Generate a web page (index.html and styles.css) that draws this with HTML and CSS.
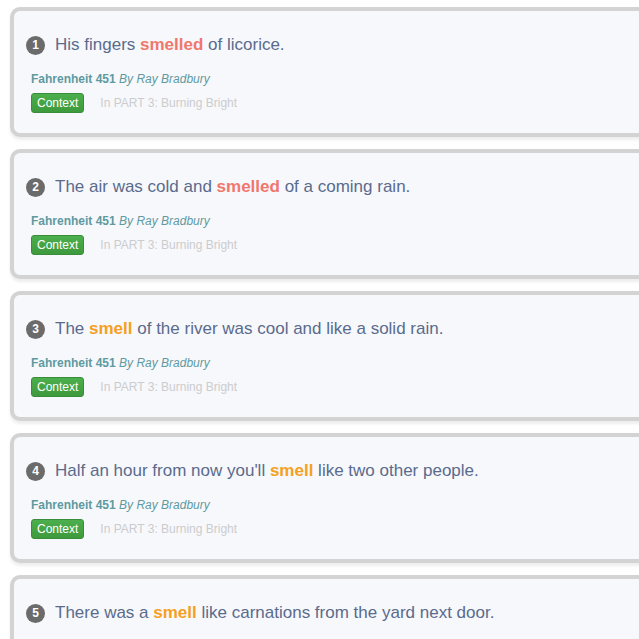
FILE: index.html
```html
<!DOCTYPE html>
<html>
<head>
<meta charset="utf-8">
<link rel="stylesheet" href="styles.css">
</head>
<body>
<div class="list">
  <div class="card">
    <div class="sentence"><span class="num">1</span><span>His fingers <b class="hl red">smelled</b> of licorice.</span></div>
    <div class="meta"><b>Fahrenheit 451</b> <i>By Ray Bradbury</i></div>
    <div class="ctx"><span class="btn">Context</span><span class="loc">In PART 3: Burning Bright</span></div>
  </div>
  <div class="card">
    <div class="sentence"><span class="num">2</span><span>The air was cold and <b class="hl red">smelled</b> of a coming rain.</span></div>
    <div class="meta"><b>Fahrenheit 451</b> <i>By Ray Bradbury</i></div>
    <div class="ctx"><span class="btn">Context</span><span class="loc">In PART 3: Burning Bright</span></div>
  </div>
  <div class="card">
    <div class="sentence"><span class="num">3</span><span>The <b class="hl orange">smell</b> of the river was cool and like a solid rain.</span></div>
    <div class="meta"><b>Fahrenheit 451</b> <i>By Ray Bradbury</i></div>
    <div class="ctx"><span class="btn">Context</span><span class="loc">In PART 3: Burning Bright</span></div>
  </div>
  <div class="card">
    <div class="sentence"><span class="num">4</span><span>Half an hour from now you'll <b class="hl orange">smell</b> like two other people.</span></div>
    <div class="meta"><b>Fahrenheit 451</b> <i>By Ray Bradbury</i></div>
    <div class="ctx"><span class="btn">Context</span><span class="loc">In PART 3: Burning Bright</span></div>
  </div>
  <div class="card">
    <div class="sentence"><span class="num">5</span><span>There was a <b class="hl orange">smell</b> like carnations from the yard next door.</span></div>
    <div class="meta"><b>Fahrenheit 451</b> <i>By Ray Bradbury</i></div>
    <div class="ctx"><span class="btn">Context</span><span class="loc">In PART 3: Burning Bright</span></div>
  </div>
</div>
</body>
</html>
```
FILE: styles.css
```css
html, body {
  margin: 0;
  padding: 0;
  background: #ffffff;
  overflow: hidden;
  font-family: "Liberation Sans", Arial, sans-serif;
}
.list {
  padding: 7px 0 0 10px;
  width: 720px;
  display: flex;
  flex-direction: column;
  gap: 12px;
}
.card {
  border: 4px solid #d3d3d3;
  border-radius: 10px;
  background: #f7f8fc;
  box-shadow: 0 3px 3px rgba(0, 0, 0, 0.07);
  height: 122px;
  padding: 24px 0 0 12px;
  box-sizing: content-box;
  height: 98px;
}
.sentence {
  display: flex;
  align-items: center;
  gap: 10px;
  font-size: 17px;
  line-height: 20px;
  color: #5a6b8c;
}
.num {
  width: 19px;
  height: 19px;
  border-radius: 50%;
  background: #6b6b6b;
  color: #ffffff;
  font-size: 12px;
  font-weight: bold;
  display: flex;
  align-items: center;
  justify-content: center;
}
.hl { font-weight: bold; }
.red { color: #f0776c; }
.orange { color: #f5a01f; }
.meta {
  margin-top: 16px;
  padding-left: 5px;
  font-size: 12px;
  line-height: 16px;
  color: #5e9aa0;
}
.ctx {
  margin-top: 6px;
  padding-left: 5px;
  display: flex;
  align-items: center;
  gap: 16px;
  font-size: 12px;
}
.btn {
  background: linear-gradient(#4cae4c, #3d9a3d);
  border: 1px solid #398c39;
  border-radius: 3px;
  color: #ffffff;
  padding: 2px 5px;
  line-height: 14px;
}
.loc {
  color: #cccccc;
}
```
